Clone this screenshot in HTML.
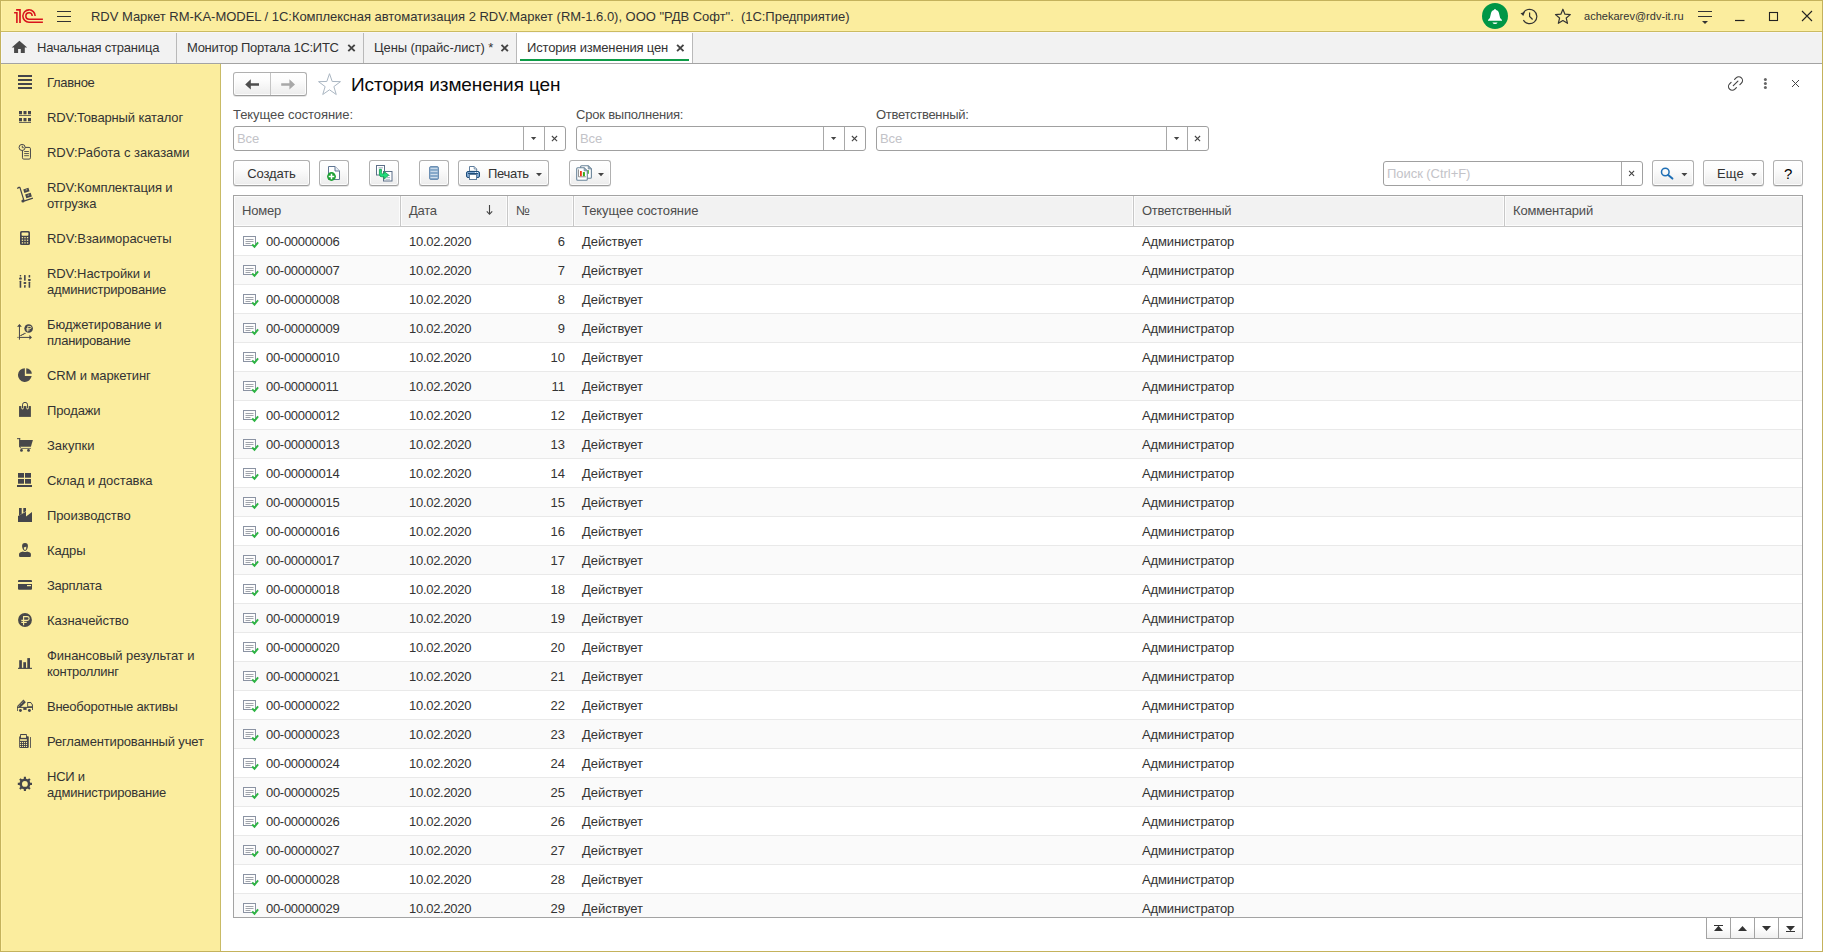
<!DOCTYPE html>
<html lang="ru">
<head>
<meta charset="utf-8">
<title>История изменения цен</title>
<style>
*{box-sizing:border-box;margin:0;padding:0}
html,body{width:1823px;height:952px;overflow:hidden;background:#fff;font-family:"Liberation Sans",Arial,sans-serif;color:#333;font-size:13px}
#win{position:absolute;left:0;top:0;width:1823px;height:952px;overflow:hidden}
svg{position:absolute;overflow:visible}
/* title bar */
#tb{position:absolute;left:0;top:0;width:1823px;height:32px;background:#fbed9e;border-bottom:1px solid #cbbb62}
#tb .ttl{position:absolute;left:91px;top:9px;font-size:13px;letter-spacing:-0.03px;line-height:16px;color:#333;white-space:pre}
#tb .usr{position:absolute;left:1584px;top:9px;font-size:11px;line-height:14px;color:#333;white-space:pre;letter-spacing:0.02px}
/* tab bar */
#tabs{position:absolute;left:0;top:32px;width:1823px;height:32px;background:#f2f2f2;border-bottom:1px solid #a3a3a3}
.tab{position:absolute;top:0;height:31px;border-right:1px solid #b9b9b9;font-size:13px;letter-spacing:-0.1px;line-height:16px;color:#333;white-space:pre}
.tab span{position:absolute;top:8px}
.tab.act{background:#fff}
.tab.act:after{content:"";position:absolute;left:3px;right:3px;top:27px;height:2px;background:#0e9c47}
/* sidebar */
#side{position:absolute;left:0;top:64px;width:221px;height:888px;background:#fbed9e;border-right:1px solid #c9bb66}
.si{position:absolute;left:0;width:220px}
.si .st{position:absolute;left:47px;top:50%;transform:translateY(-50%);font-size:13px;line-height:16px;color:#333;white-space:nowrap}
.si .st span{position:static}
.si .sic{position:absolute;left:15px;top:50%;margin-top:-10px}
/* frame */
#frame{position:absolute;left:0;top:0;width:1823px;height:952px;border:1px solid #c4b25c;pointer-events:none}
/* content */
#cnt{position:absolute;left:221px;top:64px;width:1601px;height:887px;background:#fff}
.btn{position:absolute;height:26px;border:1px solid #b0b0b0;border-bottom-color:#9e9e9e;border-radius:3px;background:linear-gradient(#ffffff 0%,#fcfcfc 35%,#ececec 100%);box-shadow:0 1px 0 rgba(0,0,0,.10),inset 0 0 0 1px rgba(255,255,255,.85);font-size:13px;color:#333;text-align:center;line-height:25px;white-space:nowrap;letter-spacing:-0.1px}
.btn span{position:absolute;top:0}
.inp{position:absolute;height:25px;border:1px solid #a0a0a0;border-radius:3px;background:#fff}
.inp .ph{position:absolute;left:3px;top:4px;letter-spacing:-0.05px;font-size:13px;line-height:16px;color:#c3c3c8;white-space:nowrap}
.inp .sep{position:absolute;top:0;bottom:0;width:1px;background:#a8a8a8}
.lbl{position:absolute;font-size:13px;line-height:16px;color:#4d4d4d;white-space:nowrap;letter-spacing:-0.03px}
.h1{position:absolute;left:351px;top:73px;font-size:19px;line-height:24px;color:#0a0a0a;white-space:nowrap;letter-spacing:-0.09px}
/* table */
#tbl{position:absolute;left:233px;top:195px;width:1570px;height:723px;border:1px solid #a3a3a3;background:#fff;overflow:hidden}
#th{position:absolute;left:0;top:0;width:1568px;height:31px;background:#f2f2f2;border-top:1px solid #fcfcfc;border-bottom:1px solid #c6c6c6;box-shadow:inset 0 -1px 0 #fcfcfc,inset 1px 0 0 #fcfcfc}
#th span{position:absolute;top:6px;font-size:13px;line-height:16px;color:#4d4d4d;white-space:nowrap;letter-spacing:-0.1px}
#th i{position:absolute;top:-1px;width:3px;height:30px;background:#c8c8c8;border-left:1px solid #fcfcfc;border-right:1px solid #fcfcfc}
.tr{position:absolute;left:0;width:1568px;height:29px;border-bottom:1px solid #e9e9e9;font-size:13px;color:#333}
.tr.alt{background:#fafafa}
.tr span{position:absolute;top:7px;line-height:16px;white-space:nowrap}
.tr .ri{position:absolute;left:9px;top:8px}
.c1{left:32px;letter-spacing:-0.3px}.c2{left:175px;letter-spacing:-0.29px}.c3{right:1237px;text-align:right}.c4{left:348px;letter-spacing:-0.05px}.c5{left:908px;letter-spacing:-0.12px}
.nb{position:absolute;top:917px;width:25px;height:22px;border:1px solid #a3a3a3;background:linear-gradient(#fff 0%,#fff 45%,#f0f0f0 100%)}
</style>
</head>
<body>
<svg width="0" height="0" style="position:absolute">
<defs>
<g id="docok"><rect x="0.5" y="1.5" width="12" height="9" fill="#fdfdfd" stroke="#8b93a3"/><path d="M2.5 4.500h8M2.500 6.500h8M2.500 8.500h5" stroke="#a0a4ac" fill="none"/><path d="M9.200 9.500l2.300 2.300L15.100 7.400" stroke="#2db443" stroke-width="1.900" fill="none"/></g>
<g id="tri"><path d="M0 0h6l-3 3.200z" fill="#444"/></g>
<g id="tri2"><path d="M0 0h5.400l-2.700 3z" fill="#444"/></g>
<g id="i-main" fill="#44454b"><rect x="3" y="3" width="14" height="2"/><rect x="3" y="7" width="14" height="2"/><rect x="3" y="11" width="14" height="2"/><rect x="3" y="15" width="14" height="2"/></g>
<g id="i-cat" fill="#44454b"><rect x="4" y="4" width="3" height="3.3"/><rect x="8.5" y="4" width="3" height="3.3"/><rect x="13" y="4" width="3" height="3.3"/><rect x="4" y="8.100" width="12" height=".8"/><rect x="4" y="11" width="3" height="3.3"/><rect x="8.5" y="11" width="3" height="3.3"/><rect x="13" y="11" width="3" height="3.3"/><rect x="4" y="15.100" width="12" height=".8"/></g>
<g id="i-ord" fill="none" stroke="#46474b"><rect x="7.450" y="5.400" width="8" height="11.700" rx="1.300"/><path d="M9.200 9.500h4.700M9.200 11.550h4.700M9.200 13.700h4.700" stroke-width="0.900"/><circle cx="7.100" cy="5.450" r="3.050" fill="#fbed9e"/><path d="M7.300 3.700v2h1.500" stroke-width="0.950"/></g>
<g id="i-ship" stroke="#44454b" fill="none"><path d="M2.200 3.500l1.700 -1.100q.8 -.4 1.150 .5l4 13" stroke-width="1.250"/><path d="M8.800 16.100l9.100 -3" stroke-width="1.200"/><circle cx="7.900" cy="16" r="1.500" fill="#44454b" stroke="none"/><g fill="#44454b" stroke="none"><g transform="rotate(-18 11.400 5.400)"><rect x="8.700" y="3.550" width="5.400" height="3.700"/><rect x="10.700" y="4.600" width="1.700" height=".8" fill="#fbed9e" opacity=".8"/></g><g transform="rotate(-18 13.500 10.500)"><rect x="10.600" y="8.500" width="5.800" height="4"/><rect x="12.700" y="9.700" width="1.700" height=".8" fill="#fbed9e" opacity=".8"/></g></g></g>
<g id="i-calc"><rect x="5" y="3" width="10" height="14" rx="1.6" fill="#44454b"/><rect x="6.600" y="4.400" width="6.800" height="3.300" rx=".6" fill="#fbed9e"/><g fill="#fbed9e"><rect x="6.8" y="9" width="1.3" height="1.3"/><rect x="9.35" y="9" width="1.3" height="1.3"/><rect x="11.9" y="9" width="1.3" height="1.3"/><rect x="6.8" y="11.6" width="1.3" height="1.3"/><rect x="9.35" y="11.6" width="1.3" height="1.3"/><rect x="11.9" y="11.6" width="1.3" height="1.3"/><rect x="6.8" y="14.2" width="1.3" height="1.3"/><rect x="9.35" y="14.2" width="1.3" height="1.3"/><rect x="11.9" y="14.2" width="1.3" height="1.3"/></g></g>
<g id="i-set" fill="#44454b"><rect x="4.650" y="3.900" width="1.600" height="1.300" rx=".5"/><rect x="5.150" y="5.100" width=".6" height="1.600" opacity=".6"/><rect x="4.050" y="6.600" width="2.800" height="2" rx=".9"/><rect x="4.650" y="9.850" width="1.600" height="6.800" rx=".5"/><rect x="9.050" y="3.900" width="1.600" height="5.800" rx=".4"/><rect x="8.450" y="11.100" width="2.900" height="2" rx="1"/><rect x="9.050" y="14.100" width="1.600" height="2.550" rx=".4"/><rect x="13.600" y="3.900" width="1.600" height="2.700" rx=".5"/><rect x="12.950" y="8.100" width="2.900" height="1.800" rx=".8"/><rect x="13.600" y="10.850" width="1.600" height="5.800" rx=".5"/></g>
<g id="i-bud" stroke="#44454b" fill="none"><path d="M4.450 4v13.700" stroke-width="1"/><path d="M4 15.400h11" stroke-width="1"/><path d="M2 15.400h2" stroke-width="1" opacity=".55"/><path d="M2.050 4.800l2.400 -2.900l2.400 2.900zM14.400 13.050l2.550 2.350l-2.550 2.350z" fill="#44454b" stroke="none"/><path d="M5.200 13.500h1.600v-1h2v-1.100h1.900" stroke-width="0.850"/><circle cx="13.630" cy="6.450" r="4.300" fill="#44454b" stroke="none"/><g transform="translate(13.630 6.450) scale(.62) translate(-9.980 -9.980)"><path d="M8.600 15.150V6.650H12.300a1.825 1.825 0 0 1 0 3.650H6.300M6.300 12.400H11.700" fill="none" stroke="#fbed9e" stroke-width="1.450"/></g></g>
<g id="i-crm" fill="#4a4a4b"><path d="M9.850 3.200A6.900 6.900 0 1 0 16.680 11.100H9.850z"/><path d="M11.240 8.840V3.240A5.600 5.600 0 0 1 16.840 8.840z"/></g>
<g id="i-sale"><rect x="4.050" y="6.070" width="11.850" height="10.830" fill="#484849"/><path d="M7.500 6V8.300M12.550 6V8.300" stroke="#fbed9e" stroke-width="2.300" stroke-linecap="round" fill="none"/><path d="M7.500 8.300V4.860a2.525 2.525 0 0 1 5.050 0V8.300" fill="none" stroke="#44454b" stroke-width="1"/></g>
<g id="i-buy" fill="#484849"><rect x="2.030" y="3.170" width="3.160" height="1" fill="#44454b"/><rect x="4.180" y="3.170" width="1.010" height="8.900" fill="#44454b"/><path d="M4.300 5.060h13.600l-2 6.810H4.300z"/><path d="M5 11.800q.2 1.600 1.200 1.630H15.900" fill="none" stroke="#44454b" stroke-width=".75"/><circle cx="6.450" cy="15.400" r="1.400" fill="#44454b"/><circle cx="13.500" cy="15.400" r="1.400" fill="#44454b"/></g>
<g id="i-wh" fill="#44454b"><rect x="3" y="3" width="6" height="4.7"/><rect x="10" y="3" width="6" height="4.7"/><rect x="3" y="9" width="6" height="4.7"/><rect x="10" y="9" width="6" height="4.7"/><rect x="2" y="15" width="15" height="2"/></g>
<g id="i-prod" fill="#44454b"><path d="M3 17v-6l8-4.2v4.7L17 7v10z"/><path d="M4 3.1h2.7v6L4 10.5zM8.3 3.1H11v3.2l-2.7 1.5z"/></g>
<g id="i-hr" fill="#464648"><path d="M10 3C12.200 3 12.900 4.400 12.900 5.800C12.900 7.800 11.900 10.900 10 10.900C8.100 10.900 7.100 7.800 7.100 5.800C7.100 4.400 7.800 3 10 3z"/><path d="M8.850 7.300Q10.200 7.500 11.250 6.600V8.200Q11.200 9.900 10 9.900Q8.900 9.900 8.850 8.200z" fill="#fbed9e"/><path d="M4.050 15.900V14Q4.050 12.700 5.600 12.300L8 11.500Q10 12.600 12 11.500L14.400 12.300Q15.900 12.700 15.900 14V15.900Q15.900 16.900 14.900 16.900H5.050Q4.050 16.900 4.050 15.900z"/></g>
<g id="i-pay" fill="#44454b"><path d="M3 6a1 1 0 011-1h12a1 1 0 011 1v1H3z"/><path d="M3 9h14v4.8a1 1 0 01-1 1H4a1 1 0 01-1-1z"/><rect x="12" y="10" width="4" height="1.2" fill="#fbed9e"/></g>
<g id="i-tre"><circle cx="9.980" cy="9.980" r="6.930" fill="#484849"/><path d="M8.600 15.150V6.650H12.300a1.825 1.825 0 0 1 0 3.650H6.300M6.300 12.400H11.700" fill="none" stroke="#fbed9e" stroke-width="1.150"/></g>
<g id="i-fin" fill="#44454b"><rect x="4.2" y="7.2" width="2.7" height="8"/><rect x="8.3" y="9.2" width="2.7" height="6"/><rect x="12.3" y="5.1" width="2.7" height="10"/><rect x="3" y="14.8" width="14" height="1.1"/></g>
<g id="i-ast" fill="#44454b"><path d="M2.030 10.900H17.900V11.900H2.030z"/><path d="M2.030 10.300h.8v4.600h-.8z"/><path d="M12.250 6.070h3.500l2.150 2.750v5.100h-.9V11.500h-4.750z"/><path d="M13.100 7h2.500l1.300 1.800v1.500h-3.800z" fill="#fbed9e"/><path d="M8.300 11.800h3.300v2.100h-3.300z"/><path d="M2.030 10.350L8.460 3.420l2.400 2.900l-5.200 4.900z"/><path d="M3.500 10.200l5.300 -5.200" stroke="#fbed9e" stroke-width=".8" stroke-dasharray=".8 .7" fill="none"/><circle cx="5.440" cy="14.500" r="2.150" fill="#fbed9e"/><circle cx="14.400" cy="14.500" r="2.150" fill="#fbed9e"/><circle cx="5.440" cy="14.500" r="1.450"/><circle cx="14.400" cy="14.500" r="1.450"/></g>
<g id="i-reg" fill="#44454b"><rect x="4.180" y="5.190" width="9.580" height="11.710" rx=".8"/><rect x="5.060" y="3.040" width="6.810" height="4.300" rx=".4"/><rect x="5.940" y="4.050" width="5.100" height="2.800" fill="#fbed9e"/><rect x="5.060" y="8.200" width="6.810" height="1.650" fill="#fbed9e"/><g fill="#fbed9e"><rect x="4.95" y="10.95" width="1.100" height="1.100"/><rect x="6.95" y="10.95" width="1.100" height="1.100"/><rect x="8.95" y="10.95" width="1.100" height="1.100"/><rect x="10.95" y="10.95" width="1.100" height="1.100"/><rect x="4.95" y="12.90" width="1.100" height="1.100"/><rect x="6.95" y="12.90" width="1.100" height="1.100"/><rect x="8.95" y="12.90" width="1.100" height="1.100"/><rect x="10.95" y="12.90" width="1.100" height="1.100"/><rect x="4.95" y="14.90" width="1.100" height="1.100"/><rect x="6.95" y="14.90" width="1.100" height="1.100"/><rect x="8.95" y="14.90" width="1.100" height="1.100"/><rect x="10.95" y="14.90" width="1.100" height="1.100"/></g><rect x="15.150" y="6.070" width=".85" height="10.830"/></g>
<g id="i-adm"><circle cx="9.9" cy="9.9" r="4.2" fill="none" stroke="#44454b" stroke-width="2.6"/><g stroke="#44454b" stroke-width="2.1"><path d="M9.9 2.8v2.4M9.9 14.6V17M2.8 9.9h2.4M14.6 9.9H17M4.9 4.9l1.7 1.7M13.2 13.2l1.7 1.7M4.9 14.9l1.7-1.7M13.2 6.6l1.7-1.7"/></g></g>
</defs>
</svg>
<div id="win">
<div id="tb">
  <svg width="1823" height="32" viewBox="0 0 1823 32" style="left:0;top:0">
    <!-- 1C logo -->
    <g fill="none" stroke="#d8141c">
      <path d="M14.100 12.800H16.900V22.900" stroke-width="1.600"/>
      <path d="M16.100 9.800H20V22.900" stroke-width="1.700"/>
      <path d="M35.150 15.900A6.150 6.150 0 1 0 29 22.150H42.900" stroke-width="1.550"/>
      <path d="M32.200 15.900A3.200 3.200 0 1 0 29 19.200H42.900" stroke-width="1.450"/>
    </g>
    <!-- hamburger -->
    <path d="M57 11.5h14M57 16.5h14M57 21.5h14" stroke="#333" stroke-width="1.2"/>
    <!-- bell -->
    <circle cx="1495" cy="16" r="13" fill="#009646"/>
    <path d="M1495 9q.9 0 1 1q3 .8 3.3 4.6q.2 3.6 2.7 5.5v.7h-14v-.7q2.500 -1.900 2.700 -5.500q.3 -3.800 3.300 -4.600q.1 -1 1 -1z" fill="#fff"/>
    <path d="M1492.400 22.400h5.200q-.8 1.700 -2.600 1.700t-2.600 -1.700z" fill="#fff"/>
    <!-- history -->
    <g stroke="#333" stroke-width="1.2" fill="none">
      <path d="M1523.100 13.500A7.200 7.200 0 1 1 1523.400 20.100"/>
      <path d="M1529.600 12.500V16.500L1532.600 19.500"/>
    </g>
    <path d="M1520.500 13.200L1524.900 12.100L1523.300 16z" fill="#333"/>
    <!-- star -->
    <polygon points="1562.90,9.20 1564.96,14.17 1570.32,14.59 1566.23,18.08 1567.48,23.31 1562.90,20.50 1558.32,23.31 1559.57,18.08 1555.48,14.59 1560.84,14.17" fill="none" stroke="#333" stroke-width="1.2" stroke-linejoin="round"/>
    <!-- menu -->
    <path d="M1698 11.500h14M1698 16.500h14" stroke="#333" stroke-width="1.1"/>
    <path d="M1702 21h6l-3 3z" fill="#333"/>
    <!-- window controls -->
    <path d="M1735 20.500h9.500" stroke="#222" stroke-width="1.2"/>
    <rect x="1769.500" y="12.500" width="8" height="8" fill="none" stroke="#222" stroke-width="1.1"/>
    <path d="M1802 11l10 10M1812 11l-10 10" stroke="#222" stroke-width="1.1"/>
  </svg>
  <div class="ttl">RDV Маркет RM-KA-MODEL / 1С:Комплексная автоматизация 2 RDV.Маркет (RM-1.6.0), ООО "РДВ Софт".  (1С:Предприятие)</div>
  <div class="usr">achekarev@rdv-it.ru</div>
</div>
<div id="tabs">
  <div class="tab" style="left:0;width:177px"><span style="left:37px;letter-spacing:-0.2px">Начальная страница</span></div>
  <div class="tab" style="left:177px;width:187px"><span style="left:10px;letter-spacing:-0.31px">Монитор Портала 1С:ИТС</span></div>
  <div class="tab" style="left:364px;width:153px"><span style="left:10px">Цены (прайс-лист) *</span></div>
  <div class="tab act" style="left:517px;width:176px"><span style="left:10px;letter-spacing:-0.17px">История изменения цен</span></div>
  <svg width="700" height="32" viewBox="0 32 700 32" style="left:0;top:0">
    <path d="M19.400 40.700L27.200 47.600H24.800V53H20.800V48.900H18.100V53H14.100V47.600H11.700z" fill="#4a4a4a"/>
    <g stroke="#444" stroke-width="1.9" fill="none">
      <path d="M348.300 44.800l6.400 6.400M354.700 44.800l-6.400 6.400"/>
      <path d="M501.500 44.800l6.400 6.400M507.900 44.800l-6.400 6.400"/>
      <path d="M677.100 44.800l6.400 6.400M683.500 44.800l-6.400 6.400"/>
    </g>
  </svg>
</div>
<div id="side"></div>
<div class="si" style="top:65px;height:35px"><svg class="sic" width="20" height="20" viewBox="0 0 20 20" style="top:7px;margin-top:0"><use href="#i-main"/></svg><span class="st"><span style="letter-spacing:-0.31px">Главное</span></span></div>
<div class="si" style="top:100px;height:35px"><svg class="sic" width="20" height="20" viewBox="0 0 20 20" style="top:7px;margin-top:0"><use href="#i-cat"/></svg><span class="st"><span style="letter-spacing:-0.151px">RDV:Товарный каталог</span></span></div>
<div class="si" style="top:135px;height:35px"><svg class="sic" width="20" height="20" viewBox="0 0 20 20" style="top:7px;margin-top:0"><use href="#i-ord"/></svg><span class="st"><span style="letter-spacing:-0.016px">RDV:Работа с заказами</span></span></div>
<div class="si" style="top:170px;height:51px"><svg class="sic" width="20" height="20" viewBox="0 0 20 20" style="top:15px;margin-top:0"><use href="#i-ship"/></svg><span class="st"><span style="letter-spacing:-0.121px">RDV:Комплектация и</span><br><span style="letter-spacing:-0.143px">отгрузка</span></span></div>
<div class="si" style="top:221px;height:35px"><svg class="sic" width="20" height="20" viewBox="0 0 20 20" style="top:7px;margin-top:0"><use href="#i-calc"/></svg><span class="st"><span style="letter-spacing:-0.062px">RDV:Взаиморасчеты</span></span></div>
<div class="si" style="top:256px;height:51px"><svg class="sic" width="20" height="20" viewBox="0 0 20 20" style="top:15px;margin-top:0"><use href="#i-set"/></svg><span class="st"><span style="letter-spacing:-0.114px">RDV:Настройки и</span><br><span style="letter-spacing:-0.208px">администрирование</span></span></div>
<div class="si" style="top:307px;height:51px"><svg class="sic" width="20" height="20" viewBox="0 0 20 20" style="top:15px;margin-top:0"><use href="#i-bud"/></svg><span class="st"><span style="letter-spacing:-0.034px">Бюджетирование и</span><br><span style="letter-spacing:-0.243px">планирование</span></span></div>
<div class="si" style="top:358px;height:35px"><svg class="sic" width="20" height="20" viewBox="0 0 20 20" style="top:7px;margin-top:0"><use href="#i-crm"/></svg><span class="st"><span style="letter-spacing:-0.101px">CRM и маркетинг</span></span></div>
<div class="si" style="top:393px;height:35px"><svg class="sic" width="20" height="20" viewBox="0 0 20 20" style="top:7px;margin-top:0"><use href="#i-sale"/></svg><span class="st"><span style="letter-spacing:-0.114px">Продажи</span></span></div>
<div class="si" style="top:428px;height:35px"><svg class="sic" width="20" height="20" viewBox="0 0 20 20" style="top:7px;margin-top:0"><use href="#i-buy"/></svg><span class="st"><span style="letter-spacing:0.013px">Закупки</span></span></div>
<div class="si" style="top:463px;height:35px"><svg class="sic" width="20" height="20" viewBox="0 0 20 20" style="top:7px;margin-top:0"><use href="#i-wh"/></svg><span class="st"><span style="letter-spacing:-0.067px">Склад и доставка</span></span></div>
<div class="si" style="top:498px;height:35px"><svg class="sic" width="20" height="20" viewBox="0 0 20 20" style="top:7px;margin-top:0"><use href="#i-prod"/></svg><span class="st"><span style="letter-spacing:-0.105px">Производство</span></span></div>
<div class="si" style="top:533px;height:35px"><svg class="sic" width="20" height="20" viewBox="0 0 20 20" style="top:7px;margin-top:0"><use href="#i-hr"/></svg><span class="st"><span style="letter-spacing:-0.094px">Кадры</span></span></div>
<div class="si" style="top:568px;height:35px"><svg class="sic" width="20" height="20" viewBox="0 0 20 20" style="top:7px;margin-top:0"><use href="#i-pay"/></svg><span class="st"><span style="letter-spacing:-0.271px">Зарплата</span></span></div>
<div class="si" style="top:603px;height:35px"><svg class="sic" width="20" height="20" viewBox="0 0 20 20" style="top:7px;margin-top:0"><use href="#i-tre"/></svg><span class="st"><span style="letter-spacing:-0.059px">Казначейство</span></span></div>
<div class="si" style="top:638px;height:51px"><svg class="sic" width="20" height="20" viewBox="0 0 20 20" style="top:15px;margin-top:0"><use href="#i-fin"/></svg><span class="st"><span style="letter-spacing:-0.062px">Финансовый результат и</span><br><span style="letter-spacing:-0.271px">контроллинг</span></span></div>
<div class="si" style="top:689px;height:35px"><svg class="sic" width="20" height="20" viewBox="0 0 20 20" style="top:7px;margin-top:0"><use href="#i-ast"/></svg><span class="st"><span style="letter-spacing:-0.238px">Внеоборотные активы</span></span></div>
<div class="si" style="top:724px;height:35px"><svg class="sic" width="20" height="20" viewBox="0 0 20 20" style="top:7px;margin-top:0"><use href="#i-reg"/></svg><span class="st"><span style="letter-spacing:-0.151px">Регламентированный учет</span></span></div>
<div class="si" style="top:759px;height:51px"><svg class="sic" width="20" height="20" viewBox="0 0 20 20" style="top:15px;margin-top:0"><use href="#i-adm"/></svg><span class="st"><span style="letter-spacing:-0.26px">НСИ и</span><br><span style="letter-spacing:-0.208px">администрирование</span></span></div>
<div id="cnt"></div>

<!-- nav buttons -->
<div class="btn" style="left:233px;top:72px;width:74px;height:24px"></div>
<svg width="120" height="36" viewBox="228 66 120 36" style="left:228px;top:66px">
  <path d="M270.500 73v22" stroke="#c4c4c4" stroke-width="1"/>
  <path d="M245.200 84.400L250.800 79.300V83.200H259V85.700H250.800V89.500z" fill="#4d4d4d"/>
  <path d="M295 84.400L289.400 79.300V83.200H281.200V85.700H289.400V89.500z" fill="#a8a8a8"/>
  <polygon points="329.50,73.70 332.20,81.48 340.44,81.65 333.87,86.62 336.26,94.50 329.50,89.80 322.74,94.50 325.13,86.62 318.56,81.65 326.80,81.48" fill="#fff" stroke="#aab6c2" stroke-width="1"/>
</svg>
<div class="h1">История изменения цен</div>
<svg width="120" height="36" viewBox="1703 66 120 36" style="left:1703px;top:66px">
  <g fill="none" stroke="#444" stroke-width="1.150" stroke-linecap="round">
    <path d="M1734.600 79.400l1.500 -1.500a3.700 3.700 0 0 1 5.300 5.300l-1.500 1.500"/>
    <path d="M1736.400 87.600l-1.500 1.500a3.700 3.700 0 0 1 -5.300 -5.300l1.500 -1.500"/>
    <path d="M1733.300 85.700l4.600 -4.600"/>
  </g>
  <g fill="#666"><circle cx="1765.400" cy="79.500" r="1.500"/><circle cx="1765.400" cy="83.500" r="1.500"/><circle cx="1765.400" cy="87.600" r="1.500"/></g>
  <path d="M1792 80l7 7M1799 80l-7 7" stroke="#444" stroke-width="1"/>
</svg>

<div class="lbl" style="left:233px;top:107px;letter-spacing:-0.063px">Текущее состояние:</div>
<div class="lbl" style="left:576px;top:107px;letter-spacing:-0.2px">Срок выполнения:</div>
<div class="lbl" style="left:876px;top:107px;letter-spacing:-0.28px">Ответственный:</div>
<div class="inp" style="left:233px;top:126px;width:333px"><span class="ph">Все</span><i class="sep" style="left:289px"></i><i class="sep" style="left:310px"></i>
  <svg width="44" height="23" viewBox="0 0 44 23" style="left:289px;top:0"><use href="#tri2" x="7.900" y="10.100"/><path d="M28.900 9l5.200 5.200M34.100 9l-5.200 5.200" stroke="#444" stroke-width="1.100"/></svg></div>
<div class="inp" style="left:576px;top:126px;width:290px"><span class="ph">Все</span><i class="sep" style="left:246px"></i><i class="sep" style="left:267px"></i>
  <svg width="44" height="23" viewBox="0 0 44 23" style="left:246px;top:0"><use href="#tri2" x="7.900" y="10.100"/><path d="M28.900 9l5.200 5.200M34.100 9l-5.200 5.200" stroke="#444" stroke-width="1.100"/></svg></div>
<div class="inp" style="left:876px;top:126px;width:333px"><span class="ph">Все</span><i class="sep" style="left:289px"></i><i class="sep" style="left:310px"></i>
  <svg width="44" height="23" viewBox="0 0 44 23" style="left:289px;top:0"><use href="#tri2" x="7.900" y="10.100"/><path d="M28.900 9l5.200 5.200M34.100 9l-5.200 5.200" stroke="#444" stroke-width="1.100"/></svg></div>

<div class="btn" style="left:233px;top:160px;width:77px;letter-spacing:-0.16px">Создать</div>
<div class="btn" style="left:319px;top:160px;width:30px"></div>
<div class="btn" style="left:369px;top:160px;width:30px"></div>
<div class="btn" style="left:419px;top:160px;width:30px"></div>
<div class="btn" style="left:458px;top:160px;width:91px"><span style="left:29px;letter-spacing:-0.3px">Печать</span></div>
<div class="btn" style="left:569px;top:160px;width:42px"></div>
<div class="inp" style="left:1383px;top:161px;width:260px"><span class="ph" style="left:3px">Поиск (Ctrl+F)</span><i class="sep" style="left:237px"></i>
  <svg width="22" height="23" viewBox="0 0 22 23" style="left:238px;top:0"><path d="M7.100 8.900l5 5M12.100 8.900l-5 5" stroke="#444" stroke-width="1.100"/></svg></div>
<div class="btn" style="left:1652px;top:160px;width:42px"></div>
<div class="btn" style="left:1703px;top:160px;width:61px"><span style="left:13px;letter-spacing:0.15px">Еще</span></div>
<div class="btn" style="left:1773px;top:160px;width:30px;font-size:15px;color:#000">?</div>
<svg width="1600" height="30" viewBox="221 158 1600 30" style="left:221px;top:158px">
  <!-- new doc -->
  <path d="M328.500 166.500h6.500l4.500 4.500v8.500h-11z" fill="#fff" stroke="#607693"/>
  <path d="M335 166.500v4.500h4.500" fill="#e8eef6" stroke="#607693"/>
  <circle cx="331.500" cy="176.500" r="4.400" fill="#1da034"/>
  <path d="M331.500 173.700v5.600M328.700 176.500h5.600" stroke="#fff" stroke-width="1.500"/>
  <!-- copy -->
  <rect x="376.500" y="165.500" width="8" height="9.500" fill="#fff" stroke="#5c6f88"/>
  <path d="M378.500 167.800h4.500" stroke="#9aa8ba"/>
  <rect x="383.500" y="171.500" width="8.500" height="9.500" fill="#fff" stroke="#5c6f88"/>
  <path d="M387 175.500h3M387 177.500h3M385.500 179.300h4.500" stroke="#9aa8ba" stroke-width=".8"/>
  <path d="M379.400 169.300h2v3.400q0 1.200 1.200 1.200h1.500v-2.300l4.600 3.500l-4.600 4v-2.300h-2.200q-2.500 0 -2.500 -2.600z" fill="#22dd7d" stroke="#17a052" stroke-width=".9"/>
  <!-- list -->
  <rect x="429.500" y="166.500" width="9" height="13" rx="1.500" fill="#86a9ca" stroke="#6d8fb3"/>
  <path d="M430.500 168.400h7M430.500 171.400h7M430.500 174.500h7M430.500 177.500h7" stroke="#cfdeec" stroke-width="1"/>
  <!-- printer -->
  <path d="M469.500 171.300v-4.800h4.700l2.500 2.500v2.300z" fill="#fff" stroke="#5f7d9c"/>
  <path d="M474.200 166.500v2.500h2.500" fill="#dfe7ef" stroke="#5f7d9c" stroke-width=".8"/>
  <rect x="466.500" y="171.500" width="13" height="6" rx="1.500" fill="#7fa6d0" stroke="#1f4f7b"/>
  <path d="M468 173.500h10" stroke="#1f4f7b" stroke-width="1"/>
  <rect x="469.500" y="174.500" width="7" height="5" fill="#fff" stroke="#5f7d9c"/>
  <rect x="474.900" y="172" width="1" height="1" fill="#fff"/><rect x="476.900" y="172" width="1" height="1" fill="#fff"/>
  <use href="#tri" x="536" y="173"/>
  <!-- report -->
  <path d="M581.600 165.800h6.600l3.200 3.200v8.200a1 1 0 0 1 -1 1h-8.800a1 1 0 0 1 -1 -1v-10.400a1 1 0 0 1 1 -1z" fill="#fff" stroke="#6a8499" stroke-width="1.100"/>
  <path d="M588.200 165.800v3.200h3.200z" fill="#9fb0bf" stroke="#6a8499" stroke-width=".6"/>
  <rect x="587.200" y="170.100" width="1.600" height="3.700" fill="#3aa81c"/>
  <path d="M577.700 167.700h6.400l3.200 3.200v8.300a1 1 0 0 1 -1 1h-8.600a1 1 0 0 1 -1 -1v-10.500a1 1 0 0 1 1 -1z" fill="#fff" stroke="#6a8499" stroke-width="1.100"/>
  <path d="M584.100 167.700v3.200h3.200z" fill="#9fb0bf" stroke="#6a8499" stroke-width=".6"/>
  <path d="M578.500 169.400v7.400h7.400" fill="none" stroke="#777" stroke-width=".8"/>
  <rect x="580" y="171" width="1.800" height="5.200" fill="#ee3515"/>
  <rect x="582.900" y="172.100" width="2" height="4.100" fill="#37aa17"/>
  <use href="#tri" x="598" y="173"/>
  <!-- search -->
  <circle cx="1665.300" cy="172" r="3.800" fill="none" stroke="#1f6fb5" stroke-width="1.500"/>
  <path d="M1668.200 175l4.200 3.600" stroke="#1f6fb5" stroke-width="2" stroke-linecap="round"/>
  <use href="#tri" x="1681.400" y="173"/>
  <use href="#tri" x="1751" y="173"/>
</svg>

<div id="tbl">
  <div id="th">
    <span style="left:8px;letter-spacing:-0.2px">Номер</span><i style="left:165px"></i>
    <span style="left:175px;letter-spacing:-0.27px">Дата</span><i style="left:272px"></i>
    <span style="left:282px">№</span><i style="left:338px"></i>
    <span style="left:348px;letter-spacing:-0.07px">Текущее состояние</span><i style="left:898px"></i>
    <span style="left:908px;letter-spacing:-0.27px">Ответственный</span><i style="left:1269px"></i>
    <span style="left:1279px;letter-spacing:-0.17px">Комментарий</span>
    <svg width="10" height="14" viewBox="0 0 10 14" style="left:250px;top:7px"><path d="M5.500 1v9.500M2.800 7.300l2.700 3 2.700 -3" stroke="#444" stroke-width="1.100" fill="none"/></svg>
  </div>
<div class="tr" style="top:31px"><svg class="ri" width="16" height="14" viewBox="0 0 16 14"><use href="#docok"/></svg><span class="c1">00-00000006</span><span class="c2">10.02.2020</span><span class="c3">6</span><span class="c4">Действует</span><span class="c5">Администратор</span></div>
<div class="tr alt" style="top:60px"><svg class="ri" width="16" height="14" viewBox="0 0 16 14"><use href="#docok"/></svg><span class="c1">00-00000007</span><span class="c2">10.02.2020</span><span class="c3">7</span><span class="c4">Действует</span><span class="c5">Администратор</span></div>
<div class="tr" style="top:89px"><svg class="ri" width="16" height="14" viewBox="0 0 16 14"><use href="#docok"/></svg><span class="c1">00-00000008</span><span class="c2">10.02.2020</span><span class="c3">8</span><span class="c4">Действует</span><span class="c5">Администратор</span></div>
<div class="tr alt" style="top:118px"><svg class="ri" width="16" height="14" viewBox="0 0 16 14"><use href="#docok"/></svg><span class="c1">00-00000009</span><span class="c2">10.02.2020</span><span class="c3">9</span><span class="c4">Действует</span><span class="c5">Администратор</span></div>
<div class="tr" style="top:147px"><svg class="ri" width="16" height="14" viewBox="0 0 16 14"><use href="#docok"/></svg><span class="c1">00-00000010</span><span class="c2">10.02.2020</span><span class="c3">10</span><span class="c4">Действует</span><span class="c5">Администратор</span></div>
<div class="tr alt" style="top:176px"><svg class="ri" width="16" height="14" viewBox="0 0 16 14"><use href="#docok"/></svg><span class="c1">00-00000011</span><span class="c2">10.02.2020</span><span class="c3">11</span><span class="c4">Действует</span><span class="c5">Администратор</span></div>
<div class="tr" style="top:205px"><svg class="ri" width="16" height="14" viewBox="0 0 16 14"><use href="#docok"/></svg><span class="c1">00-00000012</span><span class="c2">10.02.2020</span><span class="c3">12</span><span class="c4">Действует</span><span class="c5">Администратор</span></div>
<div class="tr alt" style="top:234px"><svg class="ri" width="16" height="14" viewBox="0 0 16 14"><use href="#docok"/></svg><span class="c1">00-00000013</span><span class="c2">10.02.2020</span><span class="c3">13</span><span class="c4">Действует</span><span class="c5">Администратор</span></div>
<div class="tr" style="top:263px"><svg class="ri" width="16" height="14" viewBox="0 0 16 14"><use href="#docok"/></svg><span class="c1">00-00000014</span><span class="c2">10.02.2020</span><span class="c3">14</span><span class="c4">Действует</span><span class="c5">Администратор</span></div>
<div class="tr alt" style="top:292px"><svg class="ri" width="16" height="14" viewBox="0 0 16 14"><use href="#docok"/></svg><span class="c1">00-00000015</span><span class="c2">10.02.2020</span><span class="c3">15</span><span class="c4">Действует</span><span class="c5">Администратор</span></div>
<div class="tr" style="top:321px"><svg class="ri" width="16" height="14" viewBox="0 0 16 14"><use href="#docok"/></svg><span class="c1">00-00000016</span><span class="c2">10.02.2020</span><span class="c3">16</span><span class="c4">Действует</span><span class="c5">Администратор</span></div>
<div class="tr alt" style="top:350px"><svg class="ri" width="16" height="14" viewBox="0 0 16 14"><use href="#docok"/></svg><span class="c1">00-00000017</span><span class="c2">10.02.2020</span><span class="c3">17</span><span class="c4">Действует</span><span class="c5">Администратор</span></div>
<div class="tr" style="top:379px"><svg class="ri" width="16" height="14" viewBox="0 0 16 14"><use href="#docok"/></svg><span class="c1">00-00000018</span><span class="c2">10.02.2020</span><span class="c3">18</span><span class="c4">Действует</span><span class="c5">Администратор</span></div>
<div class="tr alt" style="top:408px"><svg class="ri" width="16" height="14" viewBox="0 0 16 14"><use href="#docok"/></svg><span class="c1">00-00000019</span><span class="c2">10.02.2020</span><span class="c3">19</span><span class="c4">Действует</span><span class="c5">Администратор</span></div>
<div class="tr" style="top:437px"><svg class="ri" width="16" height="14" viewBox="0 0 16 14"><use href="#docok"/></svg><span class="c1">00-00000020</span><span class="c2">10.02.2020</span><span class="c3">20</span><span class="c4">Действует</span><span class="c5">Администратор</span></div>
<div class="tr alt" style="top:466px"><svg class="ri" width="16" height="14" viewBox="0 0 16 14"><use href="#docok"/></svg><span class="c1">00-00000021</span><span class="c2">10.02.2020</span><span class="c3">21</span><span class="c4">Действует</span><span class="c5">Администратор</span></div>
<div class="tr" style="top:495px"><svg class="ri" width="16" height="14" viewBox="0 0 16 14"><use href="#docok"/></svg><span class="c1">00-00000022</span><span class="c2">10.02.2020</span><span class="c3">22</span><span class="c4">Действует</span><span class="c5">Администратор</span></div>
<div class="tr alt" style="top:524px"><svg class="ri" width="16" height="14" viewBox="0 0 16 14"><use href="#docok"/></svg><span class="c1">00-00000023</span><span class="c2">10.02.2020</span><span class="c3">23</span><span class="c4">Действует</span><span class="c5">Администратор</span></div>
<div class="tr" style="top:553px"><svg class="ri" width="16" height="14" viewBox="0 0 16 14"><use href="#docok"/></svg><span class="c1">00-00000024</span><span class="c2">10.02.2020</span><span class="c3">24</span><span class="c4">Действует</span><span class="c5">Администратор</span></div>
<div class="tr alt" style="top:582px"><svg class="ri" width="16" height="14" viewBox="0 0 16 14"><use href="#docok"/></svg><span class="c1">00-00000025</span><span class="c2">10.02.2020</span><span class="c3">25</span><span class="c4">Действует</span><span class="c5">Администратор</span></div>
<div class="tr" style="top:611px"><svg class="ri" width="16" height="14" viewBox="0 0 16 14"><use href="#docok"/></svg><span class="c1">00-00000026</span><span class="c2">10.02.2020</span><span class="c3">26</span><span class="c4">Действует</span><span class="c5">Администратор</span></div>
<div class="tr alt" style="top:640px"><svg class="ri" width="16" height="14" viewBox="0 0 16 14"><use href="#docok"/></svg><span class="c1">00-00000027</span><span class="c2">10.02.2020</span><span class="c3">27</span><span class="c4">Действует</span><span class="c5">Администратор</span></div>
<div class="tr" style="top:669px"><svg class="ri" width="16" height="14" viewBox="0 0 16 14"><use href="#docok"/></svg><span class="c1">00-00000028</span><span class="c2">10.02.2020</span><span class="c3">28</span><span class="c4">Действует</span><span class="c5">Администратор</span></div>
<div class="tr alt" style="top:698px"><svg class="ri" width="16" height="14" viewBox="0 0 16 14"><use href="#docok"/></svg><span class="c1">00-00000029</span><span class="c2">10.02.2020</span><span class="c3">29</span><span class="c4">Действует</span><span class="c5">Администратор</span></div>
</div>
<div class="nb" style="left:1706px"></div>
<div class="nb" style="left:1730px"></div>
<div class="nb" style="left:1754px"></div>
<div class="nb" style="left:1778px"></div>
<svg width="100" height="22" viewBox="1706 917 100 22" style="left:1706px;top:917px">
  <g fill="#333">
    <path d="M1714 925h9v.9h-9zM1718.500 925.800l4.500 5.200h-9z"/>
    <path d="M1742.500 926l4.500 5h-9z"/>
    <path d="M1762 926h9l-4.500 5z"/>
    <path d="M1786 926h9l-4.500 5zM1786 931h9v.9h-9z"/>
  </g>
</svg>
<div style="position:absolute;left:1px;top:1px;width:1px;height:30px;background:#fff2a8"></div>
<div style="position:absolute;left:1px;top:30px;width:1821px;height:1px;background:#fef0a3"></div>
<div style="position:absolute;left:1px;top:32px;width:1821px;height:1px;background:#f7f7fa"></div>
<div style="position:absolute;left:1px;top:32px;width:1px;height:31px;background:#f7f7fa"></div>
<div style="position:absolute;left:1px;top:64px;width:219px;height:1px;background:#fef1a2"></div>
<div style="position:absolute;left:1px;top:64px;width:1px;height:887px;background:#fff2a8"></div>
<div id="frame"></div>
</div>
</body>
</html>
